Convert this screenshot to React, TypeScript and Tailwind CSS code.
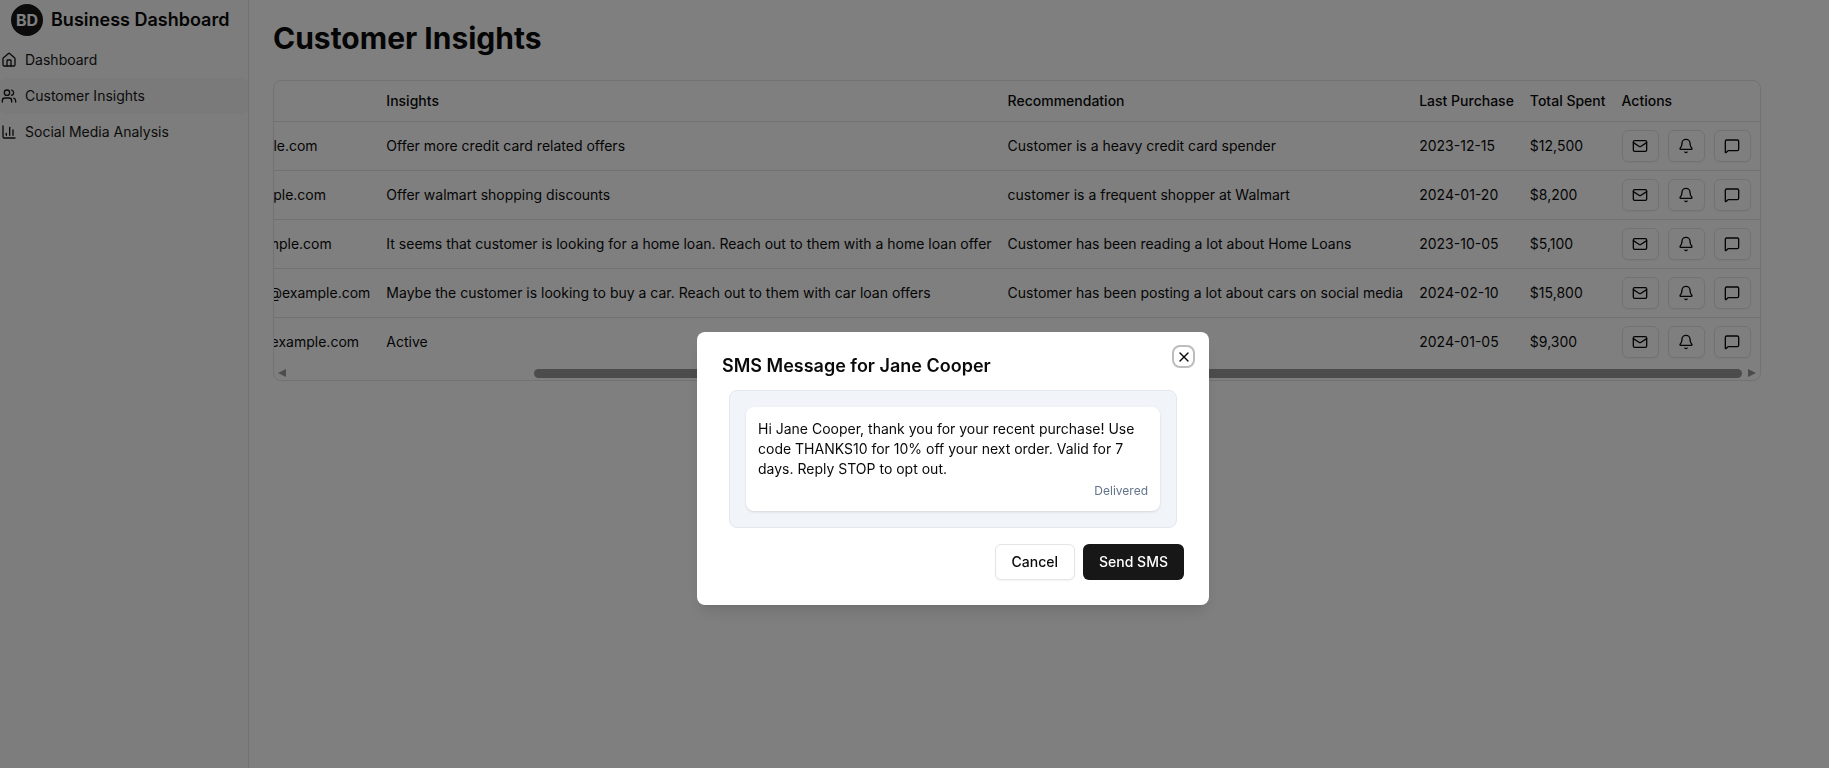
import { useLayoutEffect, useRef } from "react";
import { House, Users, ChartColumn, Mail, Bell, MessageSquare, X } from "lucide-react";

const rows = [
  ["Jane Cooper", "+1 555-0101", "jane@example.com", "Offer more credit card related offers", "Customer is a heavy credit card spender", "2023-12-15", "$12,500"],
  ["Wade Warren", "+1 555-0102", "wade@example.com", "Offer walmart shopping discounts", "customer is a frequent shopper at Walmart", "2024-01-20", "$8,200"],
  ["Esther Howard", "+1 555-0103", "esther@example.com", "It seems that customer is looking for a home loan. Reach out to them with a home loan offer", "Customer has been reading a lot about Home Loans", "2023-10-05", "$5,100"],
  ["Cameron Williamson", "+1 555-0104", "cameron.wil@example.com", "Maybe the customer is looking to buy a car. Reach out to them with car loan offers", "Customer has been posting a lot about cars on social media", "2024-02-10", "$15,800"],
  ["Brooklyn Simmons", "+1 555-0105", "brooklyn.s@example.com", "Active", "Regular customer", "2024-01-05", "$9,300"],
];

function NavItem({ icon, label, active }: { icon: React.ReactNode; label: string; active?: boolean }) {
  return (
    <div className={`flex h-9 items-center gap-2 pl-[1px] text-sm text-[#171717] ${active ? "rounded-md bg-[#f5f5f5]" : ""}`}>
      {icon}
      <span>{label}</span>
    </div>
  );
}

function ActionButton({ children }: { children: React.ReactNode }) {
  return (
    <button className="flex h-8 w-[37.5px] items-center justify-center rounded-md border border-[#e5e5e5] bg-white text-[#0a0a0a] shadow-xs">
      {children}
    </button>
  );
}

export default function App() {
  const scroller = useRef<HTMLDivElement>(null);
  useLayoutEffect(() => {
    if (scroller.current) scroller.current.scrollLeft = 99999;
  }, []);

  return (
    <div className="relative flex h-screen w-full overflow-hidden bg-white font-['Inter',sans-serif] text-[#0a0a0a]">
      <aside className="w-[249px] shrink-0 border-r border-[#e5e5e5] bg-[#fafafa]">
        <div className="flex h-[42px] items-center gap-2 pl-[11px] pb-[2px]">
          <div className="flex size-[32px] items-center justify-center rounded-full bg-[#171717] text-base font-bold text-white">BD</div>
          <span className="text-lg font-semibold whitespace-nowrap">Business Dashboard</span>
        </div>
        <nav className="flex flex-col">
          <NavItem icon={<House size={16} />} label="Dashboard" />
          <NavItem icon={<Users size={16} />} label="Customer Insights" active />
          <NavItem icon={<ChartColumn size={16} />} label="Social Media Analysis" />
        </nav>
      </aside>

      <main className="min-w-0 flex-1 pt-5 pl-6 pr-[68px]">
        <h1 className="text-3xl leading-9 font-bold">Customer Insights</h1>
        <div className="mt-6 overflow-hidden rounded-lg border border-[#e5e5e5]">
          <div ref={scroller} className="overflow-hidden">
            <table className="w-full text-sm">
              <thead>
                <tr className="h-[40px] border-b border-[#e5e5e5] text-left">
                  <th className="px-2 font-medium whitespace-nowrap">Name</th>
                  <th className="px-2 font-medium whitespace-nowrap">Phone</th>
                  <th className="px-2 font-medium whitespace-nowrap">Email</th>
                  <th className="px-2 font-medium whitespace-nowrap">Insights</th>
                  <th className="px-2 font-medium whitespace-nowrap">Recommendation</th>
                  <th className="px-2 font-medium whitespace-nowrap">Last Purchase</th>
                  <th className="px-2 font-medium whitespace-nowrap">Total Spent</th>
                  <th className="pr-[9px] pl-2 font-medium whitespace-nowrap">Actions</th>
                </tr>
              </thead>
              <tbody>
                {rows.map((r, i) => (
                  <tr key={r[0]} className={i < rows.length - 1 ? "h-[49px] border-b border-[#e5e5e5]" : "h-[49px]"}>
                    {r.map((c, j) => (
                      <td key={j} className="px-2 whitespace-nowrap">{c}</td>
                    ))}
                    <td className="pr-[9px] pl-2">
                      <div className="flex gap-[8.5px]">
                        <ActionButton><Mail size={16} /></ActionButton>
                        <ActionButton><Bell size={16} /></ActionButton>
                        <ActionButton><MessageSquare size={16} /></ActionButton>
                      </div>
                    </td>
                  </tr>
                ))}
              </tbody>
            </table>
          </div>
          <div className="flex h-[14px] items-center pr-[4px] pl-[4px]">
            <span className="h-0 w-0 border-y-[4.5px] border-r-[8px] border-y-transparent border-r-[#999999]" />
            <div className="ml-[248px] h-[9px] flex-1 rounded-full bg-[#999999]" />
            <span className="ml-[6px] h-0 w-0 border-y-[4.5px] border-l-[8px] border-y-transparent border-l-[#999999]" />
          </div>
        </div>
      </main>

      <div className="fixed inset-0 bg-black/50">
        <div className="absolute top-[332px] left-[697px] w-[512px] rounded-lg bg-white px-6 pt-[25px] pb-[25px] shadow-lg">
          <button className="absolute top-[13px] right-[14px] flex size-[23px] items-center justify-center rounded-lg border-2 border-[#bdbdbd] bg-white">
            <X size={16} />
          </button>
          <h2 className="pl-px text-lg leading-[18px] font-semibold">SMS Message for Jane Cooper</h2>
          <div className="mx-2 mt-[15px] rounded-lg border border-[#e2e8f0] bg-[#f1f5f9] p-4">
            <div className="rounded-lg bg-white p-3 shadow-sm">
              <p className="text-sm leading-5">Hi Jane Cooper, thank you for your recent purchase! Use code THANKS10 for 10% off your next order. Valid for 7 days. Reply STOP to opt out.</p>
              <p className="mt-1 text-right text-xs text-[#64748b]">Delivered</p>
            </div>
          </div>
          <div className="mt-4 mr-px flex justify-end gap-2">
            <button className="h-9 rounded-md border border-[#e5e5e5] bg-white px-4 text-sm font-medium shadow-xs">Cancel</button>
            <button className="h-9 rounded-md bg-[#171717] px-4 text-sm font-medium text-white">Send SMS</button>
          </div>
        </div>
      </div>
    </div>
  );
}
